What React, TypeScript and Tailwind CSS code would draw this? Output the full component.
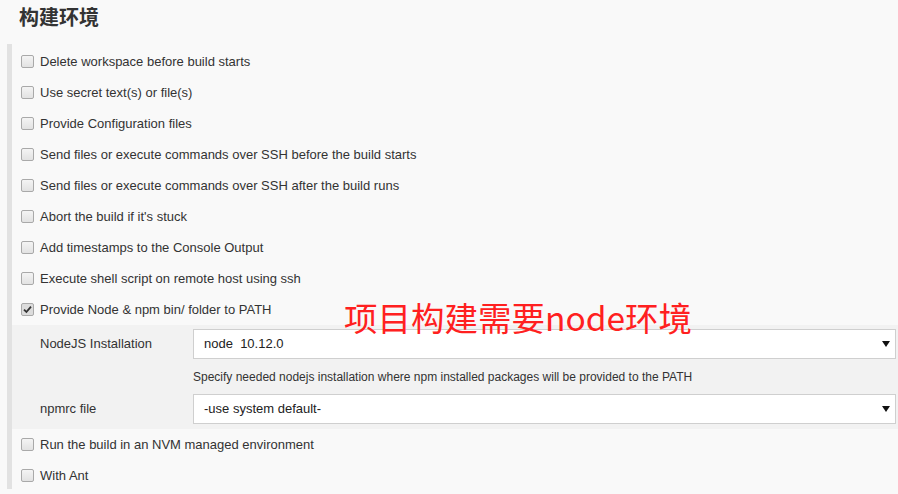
const before = [
  "Delete workspace before build starts",
  "Use secret text(s) or file(s)",
  "Provide Configuration files",
  "Send files or execute commands over SSH before the build starts",
  "Send files or execute commands over SSH after the build runs",
  "Abort the build if it's stuck",
  "Add timestamps to the Console Output",
  "Execute shell script on remote host using ssh",
];

const after = ["Run the build in an NVM managed environment", "With Ant"];

const Box = ({ checked = false }: { checked?: boolean }) => (
  <span
    className={`w-[13px] h-[13px] shrink-0 rounded-[2px] border border-[#a9a9a9] flex items-center justify-center ${
      checked ? "bg-[#dcdcdc]" : "bg-gradient-to-b from-[#f4f4f4] to-[#e2e2e2]"
    }`}
  >
    {checked ? (
      <svg width="9" height="9" viewBox="0 0 9 9">
        <path d="M1 4.6 L3.4 7 L8 1.6" fill="none" stroke="#333" strokeWidth="1.8" />
      </svg>
    ) : null}
  </span>
);

const Row = ({ label, checked }: { label: string; checked?: boolean }) => (
  <div className="h-[31px] flex items-center gap-[6px] pl-[9px]">
    <Box checked={checked} />
    <span className="text-[13px] text-[#333]">{label}</span>
  </div>
);

const Select = ({ value }: { value: string }) => (
  <div className="w-[703px] h-[30px] bg-white border border-[#cfcfcf] flex items-center justify-between pl-[10px] pr-[5px]">
    <span className="text-[13px] text-[#222] whitespace-pre">{value}</span>
    <svg width="8" height="6" viewBox="0 0 8 6">
      <path d="M0 0 H8 L4 6 Z" fill="#111" />
    </svg>
  </div>
);

export default function App() {
  return (
    <div
      className="relative w-[898px] h-[494px] bg-[#f9f9f9] overflow-hidden"
      style={{ fontFamily: '"Liberation Sans", Arial, "Noto Sans CJK SC", sans-serif' }}
    >
      <h2 className="h-[44px] pl-[19px] pt-[4px] text-[20px] font-bold text-[#333] leading-[26px] font-['Noto_Sans_CJK_SC',sans-serif]">
        构建环境
      </h2>

      <div className="ml-[7px] border-l-[5px] border-[#e2e2e2] pt-[2px] h-[445px]">
        {before.map((l) => (
          <Row key={l} label={l} />
        ))}
        <Row label="Provide Node & npm bin/ folder to PATH" checked />

        <div className="bg-[#f2f2f2] pt-[4px] pb-[5px] text-[13px] text-[#333]">
          <div className="flex items-center h-[30px]">
            <span className="w-[181px] pl-[28px]">NodeJS Installation</span>
            <Select value="node  10.12.0" />
          </div>
          <div className="h-[35px] flex items-center pl-[181px] text-[12px]">
            Specify needed nodejs installation where npm installed packages will be provided to the PATH
          </div>
          <div className="flex items-center h-[30px]">
            <span className="w-[181px] pl-[28px]">npmrc file</span>
            <Select value="-use system default-" />
          </div>
        </div>

        {after.map((l) => (
          <Row key={l} label={l} />
        ))}
      </div>

      <div className="absolute left-[344px] top-[295px] text-[33.5px] leading-[44px] text-[#ff2020] font-['Noto_Sans_CJK_SC',sans-serif] whitespace-nowrap">
        项目构建需要node环境
      </div>
    </div>
  );
}
